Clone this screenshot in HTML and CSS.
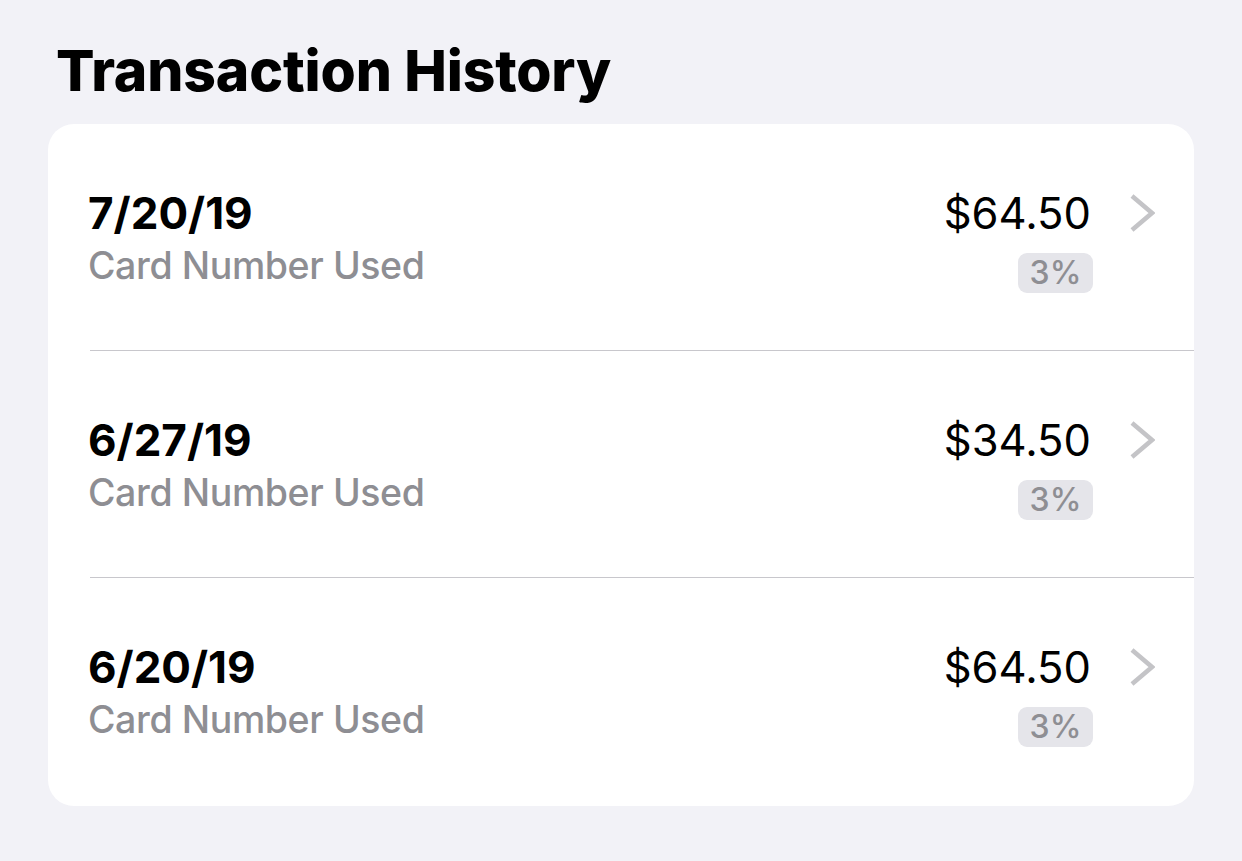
FILE: index.html
```html
<!DOCTYPE html>
<html>
<head>
<meta charset="utf-8">
<link rel="stylesheet" href="styles.css">
</head>
<body>
<div class="page">
  <h1 class="title">Transaction History</h1>
  <div class="card">
    <div class="row">
      <div class="row-inner">
        <div class="left">
          <div class="date">7/20/19</div>
          <div class="sub">Card Number Used</div>
        </div>
        <div class="right">
          <div class="amount">$64.50</div>
          <div class="badge">3%</div>
        </div>
        <svg class="chev" width="26" height="40" viewBox="0 0 26 40"><path d="M3 3 L23 20 L3 37" fill="none" stroke="#c4c4c7" stroke-width="4.5" stroke-linecap="butt" stroke-linejoin="miter"/></svg>
      </div>
    </div>
    <div class="row">
      <div class="row-inner">
        <div class="left">
          <div class="date">6/27/19</div>
          <div class="sub">Card Number Used</div>
        </div>
        <div class="right">
          <div class="amount">$34.50</div>
          <div class="badge">3%</div>
        </div>
        <svg class="chev" width="26" height="40" viewBox="0 0 26 40"><path d="M3 3 L23 20 L3 37" fill="none" stroke="#c4c4c7" stroke-width="4.5" stroke-linecap="butt" stroke-linejoin="miter"/></svg>
      </div>
    </div>
    <div class="row last">
      <div class="row-inner">
        <div class="left">
          <div class="date">6/20/19</div>
          <div class="sub">Card Number Used</div>
        </div>
        <div class="right">
          <div class="amount">$64.50</div>
          <div class="badge">3%</div>
        </div>
        <svg class="chev" width="26" height="40" viewBox="0 0 26 40"><path d="M3 3 L23 20 L3 37" fill="none" stroke="#c4c4c7" stroke-width="4.5" stroke-linecap="butt" stroke-linejoin="miter"/></svg>
      </div>
    </div>
  </div>
</div>
</body>
</html>
```
FILE: styles.css
```css
html, body {
  margin: 0;
  padding: 0;
  background: #f2f2f7;
}
body {
  font-family: Inter, "Noto Sans", "Liberation Sans", sans-serif;
  color: #000;
  height: 861px;
  overflow: hidden;
}
.page {
  padding: 37px 48px 0 48px;
}
.title {
  margin: 0 0 19px 8px;
  font-size: 57px;
  line-height: 68px;
  font-weight: 800;
  letter-spacing: -0.15px;
}
.card {
  background: #fff;
  border-radius: 26px;
  width: 1146px;
  overflow: hidden;
}
.row {
  padding-left: 42px;
}
.row-inner {
  border-bottom: 1px solid #c8c7cc;
  display: flex;
  align-items: flex-start;
  padding-top: 63px;
  padding-right: 39px;
  box-sizing: border-box;
  height: 227px;
}
.row.last .row-inner {
  border-bottom: none;
  height: 228px;
}
.left {
  flex: 1;
  margin-left: -2px;
}
.date {
  font-size: 44px;
  line-height: 52px;
  font-weight: 700;
}
.sub {
  font-size: 37.5px;
  line-height: 48px;
  font-weight: 500;
  letter-spacing: -0.4px;
  color: #8e8e93;
  margin-top: 3px;
}
.right {
  display: flex;
  flex-direction: column;
  align-items: flex-end;
}
.amount {
  font-size: 43.5px;
  line-height: 52px;
  font-weight: 400;
  margin-right: 2px;
}
.badge {
  margin-top: 14px;
  height: 40px;
  width: 75px;
  border-radius: 9px;
  background: #e5e5ea;
  color: #8e8e93;
  font-size: 32px;
  line-height: 40px;
  font-weight: 500;
  text-align: center;
}
.chev {
  margin-left: 36px;
  margin-top: 6px;
  display: block;
}
```
